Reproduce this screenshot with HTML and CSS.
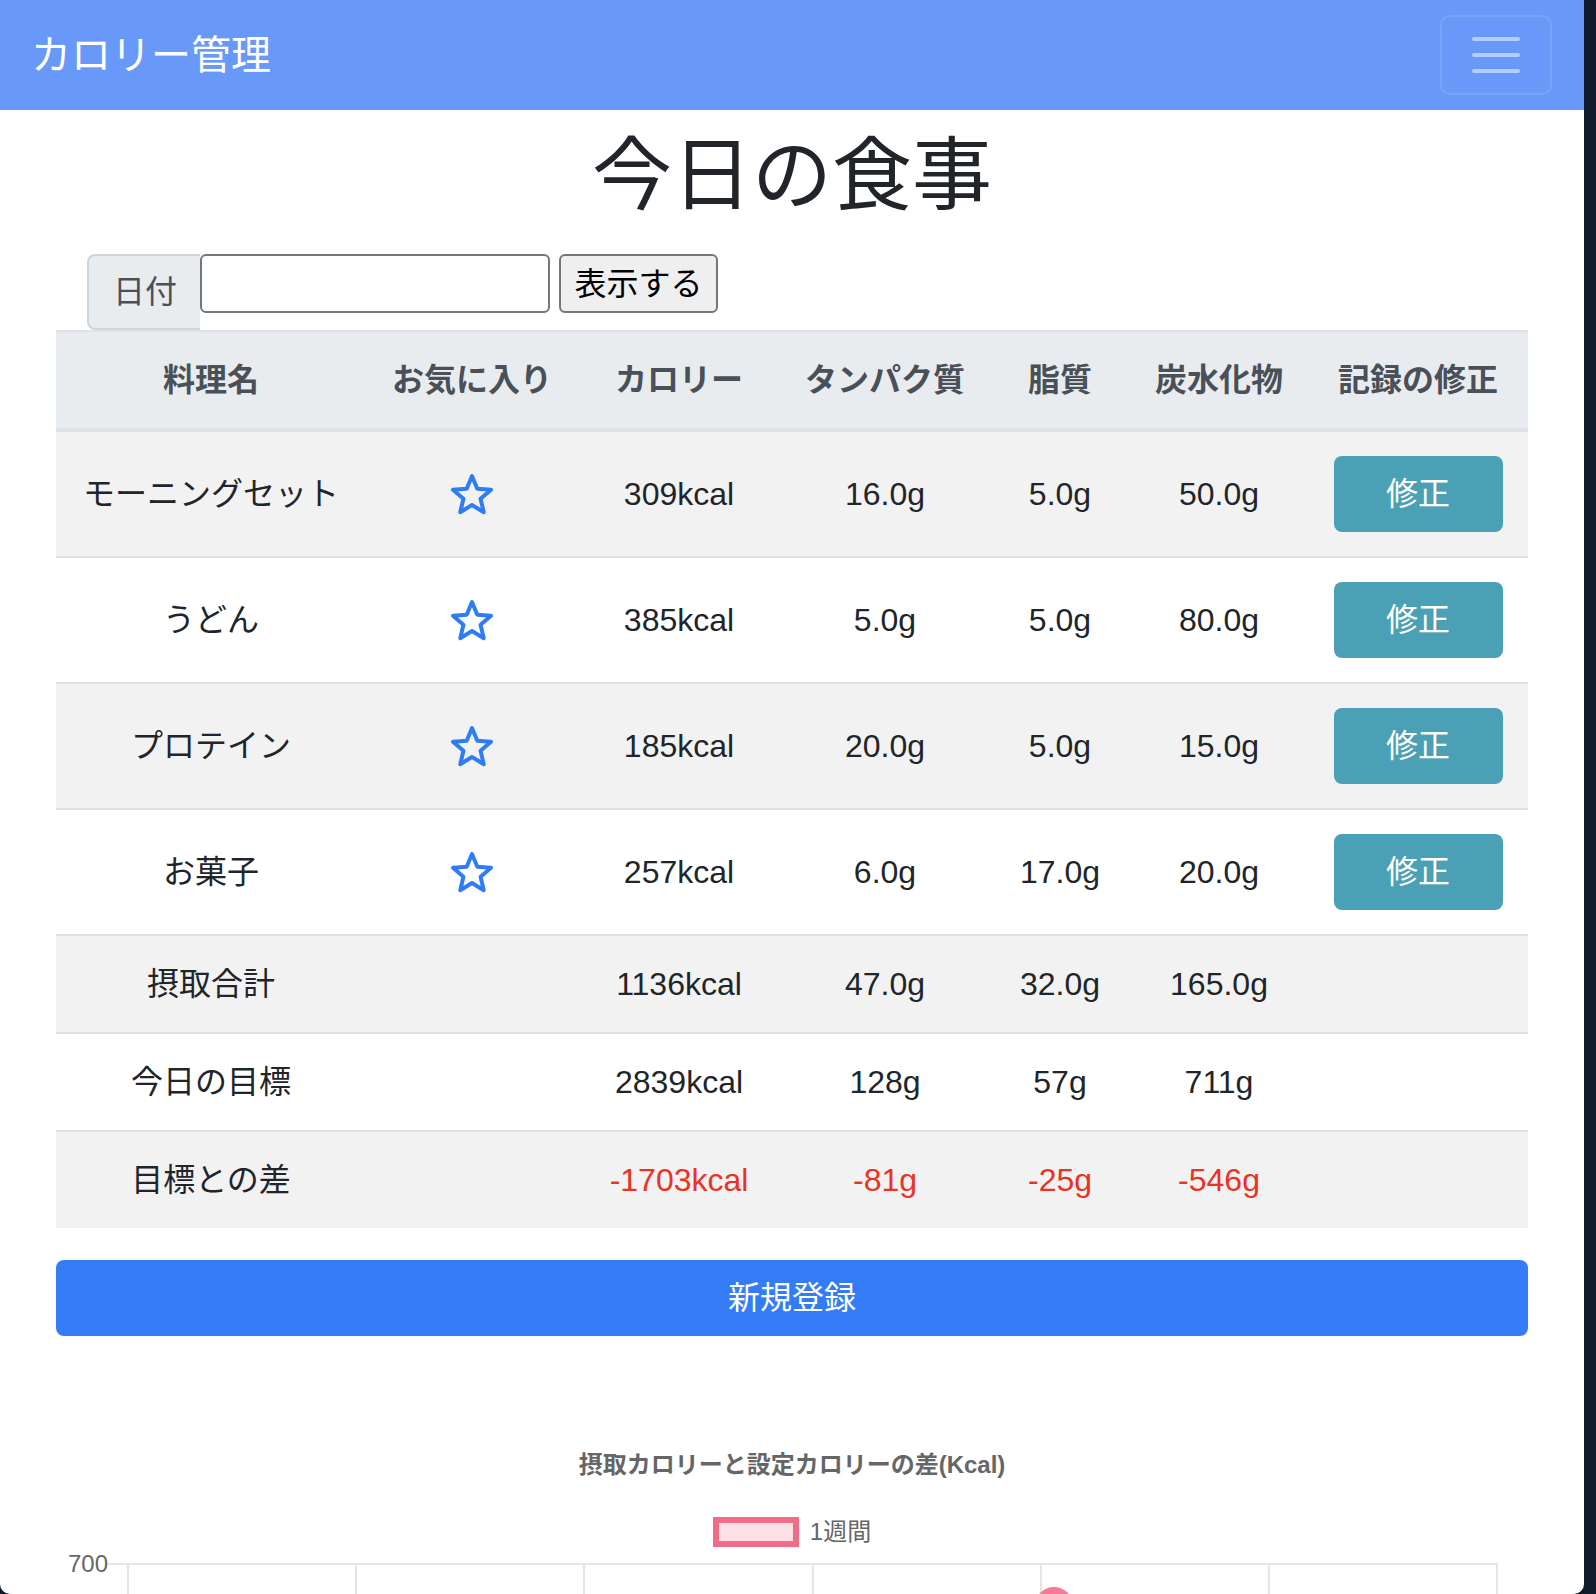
FILE: index.html
```html
<!DOCTYPE html>
<html lang="ja">
<head>
<meta charset="utf-8">
<title>カロリー管理</title>
<link rel="stylesheet" href="styles.css">
</head>
<body>
<div class="page">
  <nav class="navbar">
    <span class="brand">カロリー管理</span>
    <button class="toggler" type="button" aria-label="menu">
      <svg width="60" height="60" viewBox="0 0 60 60"><path d="M8 14h44M8 30h44M8 46h44" stroke="rgba(255,255,255,0.5)" stroke-width="4" stroke-linecap="round" fill="none"/></svg>
    </button>
  </nav>
  <main class="main">
    <h1 class="title">今日の食事</h1>
    <form class="date-form">
      <span class="date-label">日付</span>
      <input class="date-input" type="text">
      <button class="show-btn" type="button">表示する</button>
    </form>
    <table class="meals">
      <colgroup>
        <col class="c1"><col class="c2"><col class="c3"><col class="c4"><col class="c5"><col class="c6"><col class="c7">
      </colgroup>
      <thead>
        <tr><th>料理名</th><th>お気に入り</th><th>カロリー</th><th>タンパク質</th><th>脂質</th><th>炭水化物</th><th>記録の修正</th></tr>
      </thead>
      <tbody>
        <tr>
          <td>モーニングセット</td>
          <td><svg class="star" width="44" height="42" viewBox="0 0 44 42"><polygon points="22,3 27.29,15.72 41.02,16.82 30.56,25.78 33.76,39.18 22,32 10.24,39.18 13.44,25.78 2.98,16.82 16.71,15.72"/></svg></td>
          <td>309kcal</td><td>16.0g</td><td>5.0g</td><td>50.0g</td>
          <td><button class="edit-btn" type="button">修正</button></td>
        </tr>
        <tr>
          <td>うどん</td>
          <td><svg class="star" width="44" height="42" viewBox="0 0 44 42"><polygon points="22,3 27.29,15.72 41.02,16.82 30.56,25.78 33.76,39.18 22,32 10.24,39.18 13.44,25.78 2.98,16.82 16.71,15.72"/></svg></td>
          <td>385kcal</td><td>5.0g</td><td>5.0g</td><td>80.0g</td>
          <td><button class="edit-btn" type="button">修正</button></td>
        </tr>
        <tr>
          <td>プロテイン</td>
          <td><svg class="star" width="44" height="42" viewBox="0 0 44 42"><polygon points="22,3 27.29,15.72 41.02,16.82 30.56,25.78 33.76,39.18 22,32 10.24,39.18 13.44,25.78 2.98,16.82 16.71,15.72"/></svg></td>
          <td>185kcal</td><td>20.0g</td><td>5.0g</td><td>15.0g</td>
          <td><button class="edit-btn" type="button">修正</button></td>
        </tr>
        <tr>
          <td>お菓子</td>
          <td><svg class="star" width="44" height="42" viewBox="0 0 44 42"><polygon points="22,3 27.29,15.72 41.02,16.82 30.56,25.78 33.76,39.18 22,32 10.24,39.18 13.44,25.78 2.98,16.82 16.71,15.72"/></svg></td>
          <td>257kcal</td><td>6.0g</td><td>17.0g</td><td>20.0g</td>
          <td><button class="edit-btn" type="button">修正</button></td>
        </tr>
        <tr>
          <td>摂取合計</td><td></td><td>1136kcal</td><td>47.0g</td><td>32.0g</td><td>165.0g</td><td></td>
        </tr>
        <tr>
          <td>今日の目標</td><td></td><td>2839kcal</td><td>128g</td><td>57g</td><td>711g</td><td></td>
        </tr>
        <tr>
          <td>目標との差</td><td></td><td class="neg">-1703kcal</td><td class="neg">-81g</td><td class="neg">-25g</td><td class="neg">-546g</td><td></td>
        </tr>
      </tbody>
    </table>
    <button class="new-btn" type="button">新規登録</button>
  </main>
  <section class="chart">
    <div class="chart-title">摂取カロリーと設定カロリーの差(Kcal)</div>
    <div class="legend"><span class="legend-box"></span><span class="legend-text">1週間</span></div>
    <svg class="plot" width="1584" height="44" viewBox="0 0 1584 44">
      <g stroke="#e5e5e5" stroke-width="2">
        <line x1="108" y1="14" x2="1498" y2="14"/>
        <line x1="128" y1="14" x2="128" y2="44"/>
        <line x1="356" y1="14" x2="356" y2="44"/>
        <line x1="584" y1="14" x2="584" y2="44"/>
        <line x1="813" y1="14" x2="813" y2="44"/>
        <line x1="1041" y1="14" x2="1041" y2="44"/>
        <line x1="1269" y1="14" x2="1269" y2="44"/>
        <line x1="1497" y1="14" x2="1497" y2="44"/>
      </g>
      <circle cx="1054" cy="56" r="19" fill="#f47b95"/>
      <text class="ytick" x="108" y="22" text-anchor="end">700</text>
    </svg>
  </section>
</div>
</body>
</html>
```

FILE: styles.css
```css
* {
  box-sizing: border-box;
}

html,
body {
  margin: 0;
  padding: 0;
  overflow: hidden;
}

body {
  background: #0f1a2d;
  font-family: "Liberation Sans", "Noto Sans CJK JP", sans-serif;
  color: #212529;
}

.page {
  width: 1584px;
  height: 1594px;
  background: #fff;
  overflow: hidden;
  border-radius: 0 0 10px 10px;
}

.navbar {
  height: 110px;
  background: #6999f8;
  display: flex;
  align-items: center;
  justify-content: space-between;
  padding: 0 32px 0 31px;
}

.brand {
  color: #fff;
  font-size: 40px;
  line-height: 60px;
}

.toggler {
  width: 112px;
  height: 80px;
  border: 2px solid rgba(255, 255, 255, 0.1);
  border-radius: 10px;
  background: transparent;
  padding: 0;
  display: flex;
  align-items: center;
  justify-content: center;
}

.main {
  padding: 0 56px;
}

.title {
  margin: 18px 0 30px;
  font-size: 80px;
  line-height: 96px;
  font-weight: 400;
  text-align: center;
}

.date-form {
  display: flex;
  align-items: flex-start;
  height: 76px;
  margin: 0 0 0 31px;
}

.date-label {
  width: 113px;
  height: 76px;
  background: #e9ecef;
  border: 2px solid #ced4da;
  border-right: 0;
  border-radius: 8px 0 0 8px;
  color: #495057;
  font-size: 32px;
  line-height: 48px;
  padding: 12px 0 12px 24px;
}

.date-input {
  width: 350px;
  height: 59px;
  border: 2px solid #767676;
  border-radius: 6px;
  background: #fff;
  padding: 0;
  margin: 0;
}

.show-btn {
  margin-left: 9px;
  width: 159px;
  height: 59px;
  border: 2px solid #767676;
  border-radius: 6px;
  background: #efefef;
  color: #000;
  padding: 0;
  font-family: "Liberation Sans", "Noto Sans CJK JP", sans-serif;
  font-size: 32px;
  line-height: 48px;
}

.meals {
  width: 100%;
  border-collapse: separate;
  border-spacing: 0;
  table-layout: fixed;
  font-size: 32px;
  line-height: 48px;
}

.c1 { width: 310px; }
.c2 { width: 212px; }
.c3 { width: 202px; }
.c4 { width: 210px; }
.c5 { width: 140px; }
.c6 { width: 178px; }
.c7 { width: 220px; }

.meals th,
.meals td {
  padding: 24px 0;
  text-align: center;
  vertical-align: middle;
  border-top: 2px solid #dee2e6;
  white-space: nowrap;
}

.meals thead th {
  background: #e9ecef;
  color: #495057;
  font-weight: 700;
  border-bottom: 4px solid #dee2e6;
}

.meals tbody tr:first-child td {
  border-top: 0;
}

.meals tbody tr:nth-child(odd) td {
  background: #f2f2f2;
}

.meals .neg {
  color: #eb3223;
}

.star {
  display: block;
  margin: 0 auto;
  fill: none;
  stroke: #2f7df6;
  stroke-width: 4;
  stroke-linejoin: round;
}

.edit-btn {
  display: block;
  margin: 0 auto;
  width: 169px;
  height: 76px;
  border: 0;
  border-radius: 8px;
  background: #4aa1b6;
  color: #fff;
  font-family: "Liberation Sans", "Noto Sans CJK JP", sans-serif;
  font-size: 32px;
  line-height: 76px;
  padding: 0;
}

.new-btn {
  display: block;
  width: 100%;
  height: 76px;
  margin-top: 32px;
  border: 0;
  border-radius: 8px;
  background: #337cf6;
  color: #fff;
  font-family: "Liberation Sans", "Noto Sans CJK JP", sans-serif;
  font-size: 32px;
  line-height: 76px;
  padding: 0;
}

.chart {
  padding-top: 114px;
}

.chart-title {
  text-align: center;
  color: #666;
  font-size: 24px;
  line-height: 30px;
  font-weight: 700;
}

.legend {
  margin-top: 37px;
  height: 30px;
  display: flex;
  align-items: center;
  justify-content: center;
  gap: 11px;
}

.legend-box {
  width: 86px;
  height: 30px;
  background: #fbe0e6;
  border: 6px solid #f06c87;
}

.legend-text {
  color: #666;
  font-size: 24px;
  line-height: 30px;
}

.plot {
  display: block;
  margin-top: 3px;
}

.ytick {
  fill: #666;
  font-family: "Liberation Sans", "Noto Sans CJK JP", sans-serif;
  font-size: 24px;
}
```
